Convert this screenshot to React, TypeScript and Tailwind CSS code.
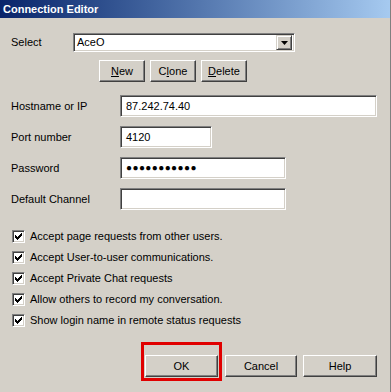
import React from "react";

const font = { fontFamily: "Tahoma, 'Liberation Sans', Arial, sans-serif" };

const Button = ({ label, u, w }: { label: string; u?: number; w: string }) => (
  <div
    className={`${w} h-[22px] flex items-center justify-center bg-[#d4d0c8] text-[11px] text-black border border-t-white border-l-white border-b-[#404040] border-r-[#404040] shadow-[inset_-1px_-1px_0_#808080]`}
  >
    {u === undefined ? (
      label
    ) : (
      <span>
        {label.slice(0, u)}
        <span className="underline">{label[u]}</span>
        {label.slice(u + 1)}
      </span>
    )}
  </div>
);

const Field = ({ w, value, dots }: { w: string; value?: string; dots?: boolean }) => (
  <div
    className={`${w} h-[22px] bg-white border border-t-[#808080] border-l-[#808080] border-b-white border-r-white shadow-[inset_1px_1px_0_#404040,inset_-1px_-1px_0_#d4d0c8] flex items-center px-[5px] text-[11px] text-black`}
  >
    {dots ? <span className="tracking-[0.4px] text-[10px] leading-none">{value}</span> : value}
  </div>
);

const Check = ({ label }: { label: string }) => (
  <div className="flex items-center h-[21px]">
    <div className="w-[13px] h-[13px] bg-white border border-t-[#808080] border-l-[#808080] border-b-white border-r-white shadow-[inset_1px_1px_0_#404040,inset_-1px_-1px_0_#d4d0c8] flex items-center justify-center">
      <svg width="7" height="7" viewBox="0 0 7 7">
        <path d="M0 2h1v1h1v1h1v-1h1v-1h1v-1h1v-1h1v3h-1v1h-1v1h-1v1h-1v1h-1v-1h-1v-1h-1v-1h-1z" fill="#000" />
      </svg>
    </div>
    <span className="ml-[5px] text-[11px] text-black">{label}</span>
  </div>
);

export default function App() {
  return (
    <div style={font} className="w-[391px] h-[392px] bg-[#d4d0c8] flex flex-col overflow-hidden border-r border-r-[#808080]">
      <div className="h-[18px] bg-gradient-to-r from-[#0a246a] to-[#a6caf0] flex items-center pl-[3px]">
        <span className="text-white font-bold text-[11px]">Connection Editor</span>
      </div>

      <div className="flex flex-col px-[11px]">
        <div className="flex items-center mt-[15px]">
          <span className="w-[62px] text-[11px] text-black">Select</span>
          <div className="w-[222px] h-[19px] bg-white border border-t-[#808080] border-l-[#808080] border-b-white border-r-white shadow-[inset_1px_1px_0_#404040,inset_-1px_-1px_0_#d4d0c8] flex items-center pl-[3px] pr-[2px] text-[11px]">
            <span className="flex-1">AceO</span>
            <div className="w-[16px] h-[15px] bg-[#d4d0c8] border border-t-[#d4d0c8] border-l-[#d4d0c8] border-b-[#404040] border-r-[#404040] shadow-[inset_1px_1px_0_#fff,inset_-1px_-1px_0_#808080] flex items-center justify-center">
              <svg width="7" height="4" viewBox="0 0 7 4">
                <path d="M0 0h7L3.5 4z" fill="#000" />
              </svg>
            </div>
          </div>
        </div>

        <div className="flex gap-[5px] mt-[8px] ml-[88px]">
          <Button label="New" u={0} w="w-[46px]" />
          <Button label="Clone" u={1} w="w-[46px]" />
          <Button label="Delete" u={0} w="w-[46px]" />
        </div>

        <div className="flex flex-col gap-[9px] mt-[13px]">
          <div className="flex items-center">
            <span className="w-[109px] text-[11px] text-black">Hostname or IP</span>
            <Field w="w-[257px]" value="87.242.74.40" />
          </div>
          <div className="flex items-center">
            <span className="w-[109px] text-[11px] text-black">Port number</span>
            <Field w="w-[92px]" value="4120" />
          </div>
          <div className="flex items-center">
            <span className="w-[109px] text-[11px] text-black">Password</span>
            <Field w="w-[166px]" value="●●●●●●●●●●●" dots />
          </div>
          <div className="flex items-center">
            <span className="w-[109px] text-[11px] text-black">Default Channel</span>
            <Field w="w-[166px]" />
          </div>
        </div>

        <div className="flex flex-col mt-[16px] ml-[1px]">
          <Check label="Accept page requests from other users." />
          <Check label="Accept User-to-user communications." />
          <Check label="Accept Private Chat requests" />
          <Check label="Allow others to record my conversation." />
          <Check label="Show login name in remote status requests" />
        </div>

        <div className="flex justify-end mt-[24px] gap-[6px] pr-[2px]">
          <div className="border-[3px] border-[#e00000] pt-[10px] px-[1px] pb-[1px] -mt-[13px] -mb-[4px] -mr-[3px]">
            <Button label="OK" w="w-[73px]" />
          </div>
          <Button label="Cancel" w="w-[72px]" />
          <Button label="Help" w="w-[74px]" />
        </div>
      </div>
    </div>
  );
}
